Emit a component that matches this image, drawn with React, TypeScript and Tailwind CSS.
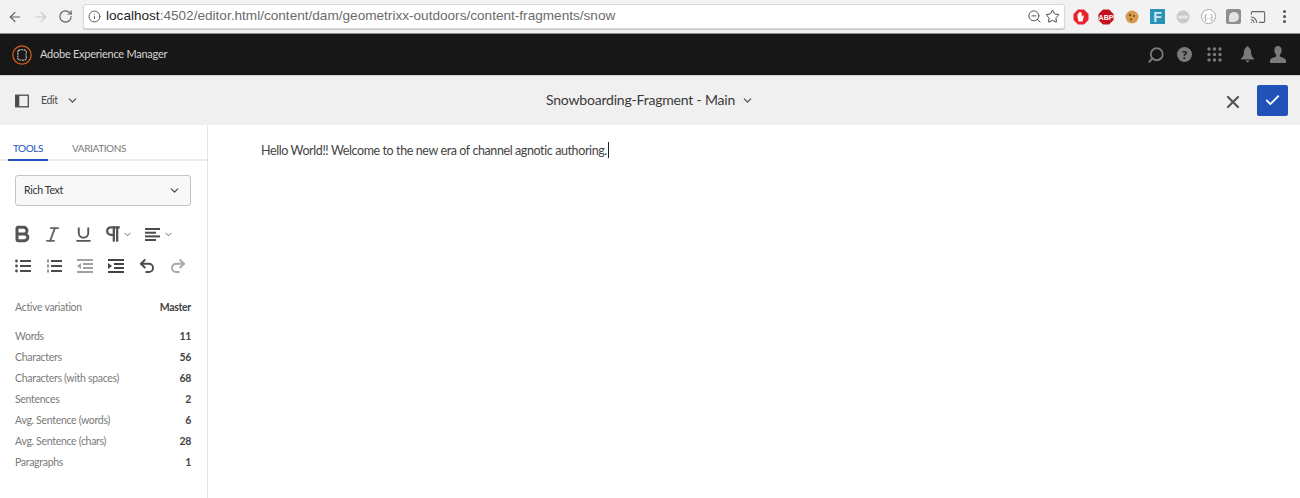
import { ArrowLeft, ArrowRight, RotateCw, Info, ZoomOut, Star, Search, Check, X, ChevronDown, Undo2, Redo2, Cast, Bold, Italic, Underline, Pilcrow } from "lucide-react";

const STATS = [
  { label: "Words", value: "11" },
  { label: "Characters", value: "56" },
  { label: "Characters (with spaces)", value: "68" },
  { label: "Sentences", value: "2" },
  { label: "Avg. Sentence (words)", value: "6" },
  { label: "Avg. Sentence (chars)", value: "28" },
  { label: "Paragraphs", value: "1" },
];

const Bullets = ({ numbered }: { numbered?: boolean }) => (
  <svg width="16" height="14" viewBox="0 0 16 14" className="text-[#4b4b4b]">
    {[1, 6, 11].map((y) =>
      numbered ? (
        <rect key={y} x="1" y={y - 0.5} width="2" height="3" fill="currentColor" opacity="0.6" />
      ) : (
        <circle key={y} cx="1.500" cy={y + 1} r="1.400" fill="currentColor" />
      )
    )}
    {[1, 6, 11].map((y) => (
      <rect key={y} x="5" y={y} width="11" height="2" fill="currentColor" />
    ))}
  </svg>
);

const Indent = ({ out, className }: { out?: boolean; className?: string }) => (
  <svg width="16" height="14" viewBox="0 0 16 14" className={className}>
    <rect x="0" y="0" width="16" height="2" fill="currentColor" />
    <rect x="6" y="4" width="10" height="2" fill="currentColor" />
    <rect x="6" y="8" width="10" height="2" fill="currentColor" />
    <rect x="0" y="12" width="16" height="2" fill="currentColor" />
    <path d={out ? "M4 4v6L0 7z" : "M0 4v6l4-3z"} fill="currentColor" />
  </svg>
);

const AlignLeft = () => (
  <svg width="15" height="13" viewBox="0 0 15 13" className="text-[#4b4b4b]">
    <rect y="0" width="15" height="2" fill="currentColor" />
    <rect y="3.700" width="11" height="2" fill="currentColor" />
    <rect y="7.400" width="15" height="2" fill="currentColor" />
    <rect y="11" width="11" height="2" fill="currentColor" />
  </svg>
);

const ExtensionIcons = () => (
  <div className="ml-[8px] flex items-center gap-[5px]">
    <svg width="16" height="16" viewBox="0 0 16 16">
      <path d="M5 .5h6L15.500 5v6L11 15.500H5L.5 11V5z" fill="#e8212b" />
      <path d="M5.500 12.500 4.500 8V5h1v2-3.500h1V7 3h1.200v4-3.500h1V7.500L10 6.500h1L10 10.500l-.5 2z" fill="#fff" />
    </svg>
    <svg width="16" height="16" viewBox="0 0 16 16" className="ml-[4px]">
      <path d="M5 .5h6L15.500 5v6L11 15.500H5L.5 11V5z" fill="#c4101a" />
      <text x="8" y="10.500" textAnchor="middle" fontSize="7" fontWeight="700" fill="#fff" fontFamily="Liberation Sans">ABP</text>
    </svg>
    <svg width="16" height="16" viewBox="0 0 16 16" className="ml-[5px]">
      <circle cx="8" cy="8" r="6.500" fill="#d89a4c" />
      <circle cx="6" cy="6" r="1.200" fill="#7a4a1c" />
      <circle cx="10" cy="7" r="1" fill="#7a4a1c" />
      <circle cx="7" cy="10.500" r="1.100" fill="#7a4a1c" />
    </svg>
    <div className="ml-[5px] flex h-[15px] w-[15px] items-center justify-center bg-[#2a94b8] font-['Liberation_Sans',sans-serif] text-[14px] leading-none font-bold text-[#cfe7ef]">F</div>
    <svg width="16" height="16" viewBox="0 0 16 16" className="ml-[5px]">
      <circle cx="8" cy="8" r="6.500" fill="#c9c9c9" />
      <rect x="3" y="6.500" width="10" height="3" rx="1.500" fill="#e6e6e6" />
    </svg>
    <div className="ml-[5px] flex h-[15px] w-[15px] items-center justify-center rounded-full border border-[#a8a8a8] bg-white font-['Liberation_Sans',sans-serif] text-[7px] leading-none text-[#777]">{"{..}"}</div>
    <div className="ml-[5px] flex h-[15px] w-[15px] items-center justify-center rounded-[2px] bg-[#8f8f8f]">
      <div className="h-[10px] w-[10px] rounded-[50%_50%_50%_10%] bg-[#e4e4e4]" />
    </div>
    <Cast size={16} strokeWidth={1.7} className="ml-[4px] text-[#666]" />
  </div>
);

const AemLogo = () => (
  <svg width="20" height="20" viewBox="0 0 20 20">
    <circle cx="10" cy="10" r="9.200" fill="none" stroke="#d9601a" strokeWidth="1.200" />
    <path d="M6.500 5.500C8 4.500 12 4.500 13.500 5.500 15 6.500 14 8 14 10s1 3.500-.5 4.500C12 15.500 8 15.500 6.500 14.500 5 13.500 6 12 6 10S5 6.500 6.500 5.500z" fill="none" stroke="#c9c9c9" strokeWidth="1.100" strokeDasharray="2 0.600" />
  </svg>
);

const GridDots = () => (
  <svg width="15" height="15" viewBox="0 0 15 15" fill="#7a7a7a">
    {[2, 7.500, 13].flatMap((y) =>
      [2, 7.500, 13].map((x) => <circle key={`${x}-${y}`} cx={x} cy={y} r="1.700" />)
    )}
  </svg>
);

const BellSolid = () => (
  <svg width="13" height="17" viewBox="0 0 13 17" fill="#7a7a7a" className="ml-[19px]">
    <circle cx="6.500" cy="1.500" r="1.300" />
    <path d="M6.500 1.500c2.500 0 3.500 2 3.500 4.500 0 3 1 5 3 6.500v1H0v-1c2-1.500 3-3.500 3-6.500 0-2.500 1-4.500 3.500-4.500z" />
    <path d="M4.800 14.500h3.400a1.700 1.700 0 0 1-3.400 0z" />
  </svg>
);

const UserSolid = () => (
  <svg width="16" height="17" viewBox="0 0 16 17" fill="#7a7a7a" className="ml-[16px]">
    <path d="M8 0c2.400 0 3.600 1.800 3.600 4.300 0 2-.8 3.700-1.800 4.700v1.500c1.800.8 6.200 1.800 6.200 4V17H0v-2.500c0-2.200 4.400-3.200 6.200-4V9C5.200 8 4.400 6.300 4.400 4.300 4.400 1.800 5.600 0 8 0z" />
  </svg>
);

export default function App() {
  return (
    <div className="h-[498px] w-[1300px] overflow-hidden bg-white font-['Lato','Noto_Sans',sans-serif]">
      {/* browser chrome */}
      <div className="flex h-[34px] items-center border-b border-[#8c8c8c] bg-[#f2f2f2] pr-[8px] pl-[7px]">
        <ArrowLeft size={16} strokeWidth={1.8} className="text-[#5f6368]" />
        <ArrowRight size={16} strokeWidth={1.8} className="ml-[10px] text-[#c8c8c8]" />
        <RotateCw size={15} strokeWidth={1.8} className="ml-[9px] text-[#5f6368]" />
        <div className="ml-[10px] flex h-[25px] w-[982px] items-center rounded-[3px] border border-[#d8d8d8] bg-white pr-[4px] pl-[4px] shadow-[0_1px_1px_#c4c4c4]">
          <Info size={13} strokeWidth={1.8} className="text-[#555]" />
          <div className="ml-[5px] flex-1 font-['Liberation_Sans',sans-serif] text-[13.600px] text-[#6b6b6b]">
            <span className="text-[#222]">localhost</span>:4502/editor.html/content/dam/geometrixx-outdoors/content-fragments/snow
          </div>
          <ZoomOut size={15} strokeWidth={1.6} className="text-[#555]" />
          <Star size={15} strokeWidth={1.6} className="ml-[3px] text-[#444]" />
        </div>
        <ExtensionIcons />
        <div className="ml-[17px] flex flex-col gap-[2px]">
          <span className="h-[3px] w-[3px] rounded-full bg-[#555]" />
          <span className="h-[3px] w-[3px] rounded-full bg-[#555]" />
          <span className="h-[3px] w-[3px] rounded-full bg-[#555]" />
        </div>
      </div>

      {/* shell bar */}
      <div className="flex h-[42px] items-center border-b border-[#d0d0d0] bg-[#171717] pr-[14px] pl-[12px]">
        <AemLogo />
        <span className="ml-[8px] text-[11px] tracking-[-0.25px] text-[#d6d6d6]">Adobe Experience Manager</span>
        <div className="ml-auto flex items-center">
          <Search size={18} strokeWidth={2.4} className="-scale-x-100 text-[#7a7a7a]" />
          <div className="ml-[12px] flex h-[15px] w-[15px] items-center justify-center rounded-full bg-[#7a7a7a] text-[12px] leading-none font-black text-[#171717]">?</div>
          <div className="ml-[15px]"><GridDots /></div>
          <BellSolid />
          <UserSolid />
        </div>
      </div>

      {/* editor toolbar */}
      <div className="relative flex h-[49px] items-center bg-[#f0f0f0] pr-[12px] pl-[15px]">
        <svg width="14" height="14" viewBox="0 0 14 14" className="text-[#4b4b4b]">
          <rect x="0.700" y="1.200" width="12.600" height="11.600" fill="none" stroke="currentColor" strokeWidth="1.300" />
          <rect x="0.700" y="1.200" width="3.600" height="11.600" fill="currentColor" />
        </svg>
        <span className="ml-[12px] text-[10.500px] tracking-[-0.3px] text-[#4b4b4b]">Edit</span>
        <ChevronDown size={13} strokeWidth={2.2} className="ml-[8px] text-[#4b4b4b]" />
        <div className="flex-1" />
        <div className="absolute top-[15px] left-[546px] flex items-center">
          <span className="text-[14px] leading-[18px] tracking-[-0.2px] text-[#3a3a3a]">Snowboarding-Fragment - Main</span>
          <ChevronDown size={13} strokeWidth={2.2} className="ml-[6px] text-[#4b4b4b]" />
        </div>
        <X size={20} strokeWidth={2.6} className="mt-[3px] text-[#555]" />
        <div className="ml-[14px] flex h-[31px] w-[31px] items-center justify-center rounded-[2px] bg-[#2152b8]">
          <Check size={17} strokeWidth={2.5} className="text-white" />
        </div>
      </div>

      <div className="flex h-[373px]">
        {/* side panel */}
        <aside className="w-[208px] shrink-0 border-r border-[#e4e4e4]">
          <div className="flex h-[36px] items-end border-b-2 border-[#ececec] pl-[8px]">
            <div className="-mb-[2px] flex h-[28px] w-[40px] justify-center border-b-2 border-[#2152b8] pt-[9px] text-[10px] leading-[13px] tracking-[-0.4px] text-[#2152b8]">TOOLS</div>
            <div className="-mb-[2px] ml-[24px] h-[28px] pt-[9px] text-[10px] leading-[13px] tracking-[-0.4px] text-[#7a7a7a]">VARIATIONS</div>
          </div>
          <div className="mt-[14px] ml-[15px] flex h-[31px] w-[176px] items-center justify-between rounded-[3px] border border-[#c4c4c4] bg-[#f8f8f8] pr-[9px] pl-[8px] text-[10.500px] tracking-[-0.3px] text-[#333]">
            Rich Text
            <ChevronDown size={13} strokeWidth={2.2} className="text-[#444]" />
          </div>
          <div className="mt-[17px] ml-[12px] flex h-[22px] items-center text-[#555]">
            <Bold size={20} strokeWidth={3.6} />
            <Italic size={19} strokeWidth={2.4} className="ml-[11px] text-[#666]" />
            <Underline size={19} strokeWidth={2.4} className="ml-[12px]" />
            <Pilcrow size={20} strokeWidth={2.8} className="ml-[10px]" />
            <ChevronDown size={11} strokeWidth={1.8} className="-ml-[1px]" />
            <div className="ml-[12px]"><AlignLeft /></div>
            <ChevronDown size={11} strokeWidth={1.8} className="ml-[3px]" />
          </div>
          <div className="mt-[11px] ml-[15px] flex h-[20px] items-center">
            <Bullets />
            <div className="ml-[15px]"><Bullets numbered /></div>
            <Indent out className="ml-[15px] text-[#a0a0a0]" />
            <Indent className="ml-[15px] text-[#444]" />
            <Undo2 size={18} strokeWidth={2.6} className="ml-[14px] text-[#4b4b4b]" />
            <Redo2 size={18} strokeWidth={2.6} className="ml-[13px] text-[#aaa]" />
          </div>

          <div className="mt-[23px] flex h-[18px] items-center justify-between pr-[16px] pl-[15px] text-[10.500px] tracking-[-0.3px] text-[#7a7a7a]">
            Active variation
            <span className="font-bold text-[#444]">Master</span>
          </div>
          <div className="mt-[9px] pr-[16px] pl-[15px]">
            {STATS.map((s) => (
              <div key={s.label} className="flex h-[21px] items-center justify-between text-[10.500px] tracking-[-0.3px] text-[#7a7a7a]">
                {s.label}
                <span className="font-bold text-[#444]">{s.value}</span>
              </div>
            ))}
          </div>
        </aside>

        {/* editor body */}
        <main className="flex-1 pt-[17px] pl-[53px] text-[12.500px] leading-[18px] tracking-[-0.4px] text-[#444]">
          Hello World!! Welcome to the new era of channel agnotic authoring.
          <span className="ml-[1px] inline-block h-[16px] w-px bg-[#222] align-text-bottom" />
        </main>
      </div>
    </div>
  );
}
